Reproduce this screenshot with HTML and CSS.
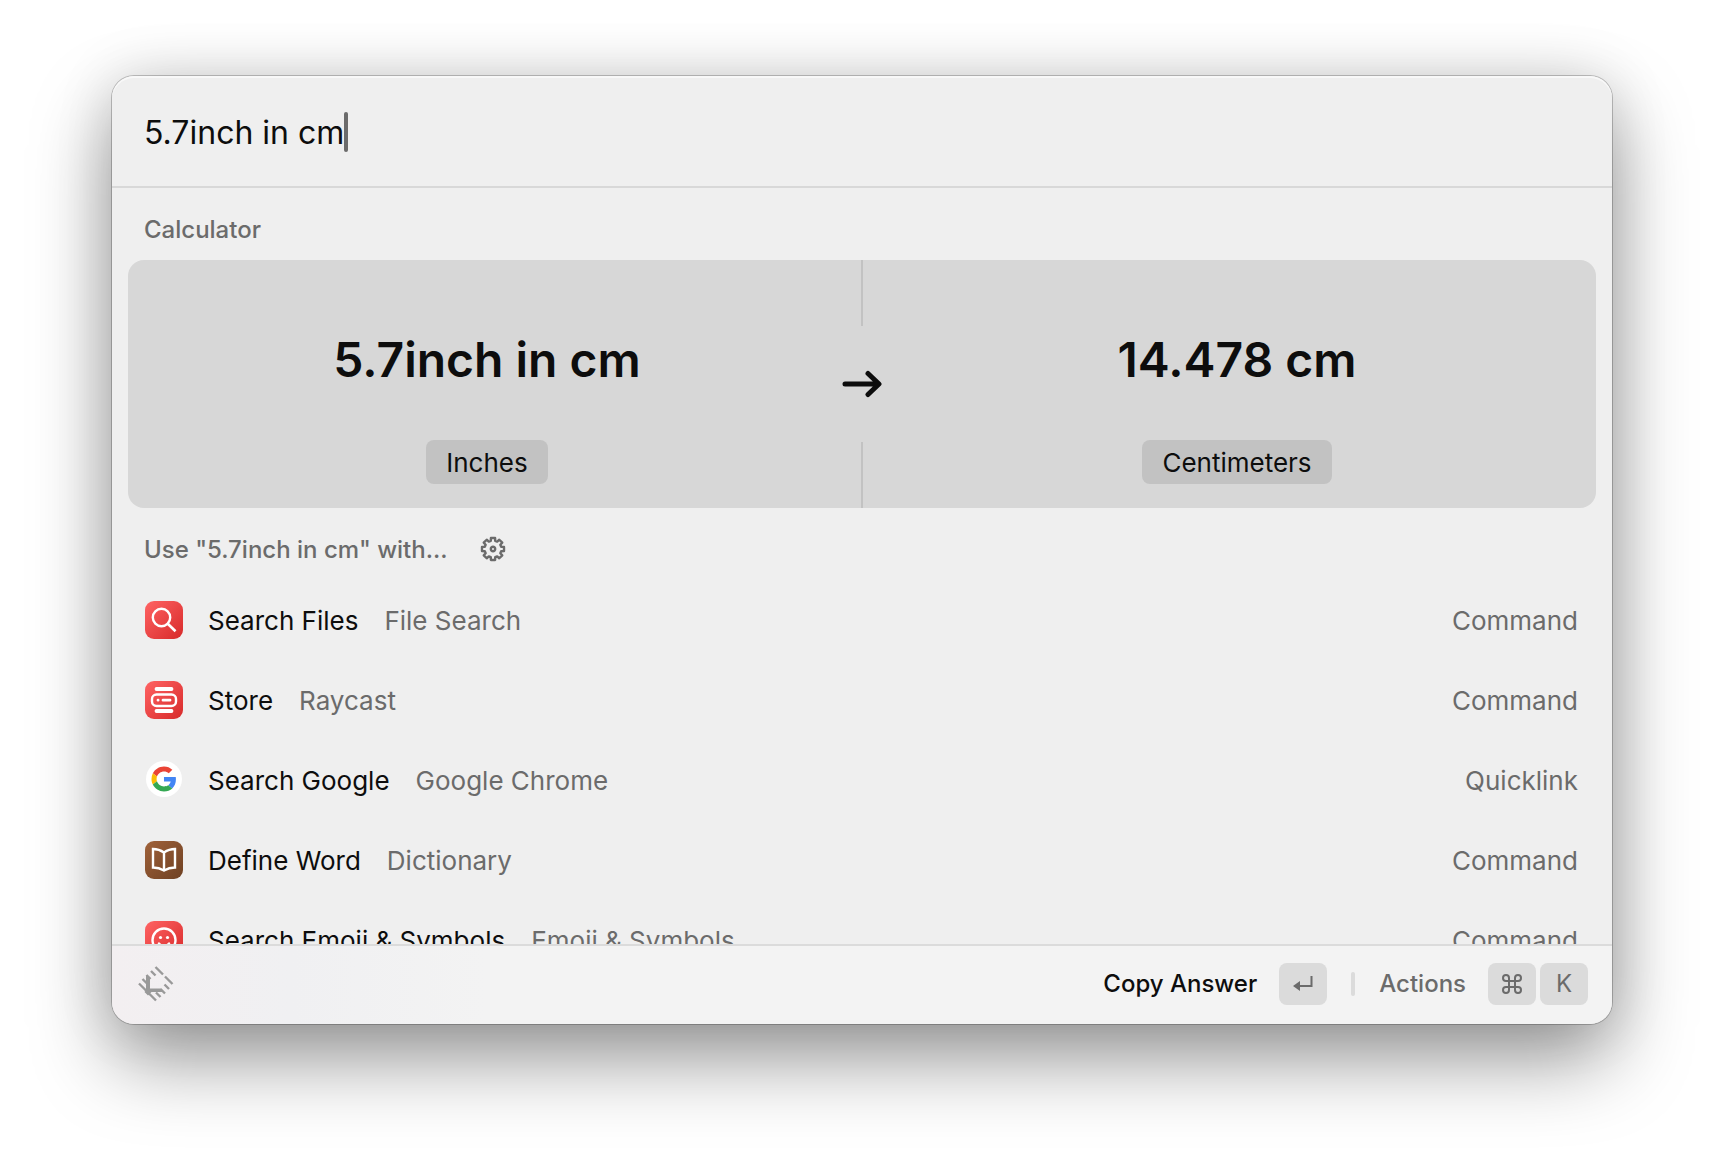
FILE: index.html
```
<!DOCTYPE html>
<html lang="en">
<head>
<meta charset="utf-8">
<title>Raycast</title>
<link rel="stylesheet" href="styles.css">
</head>
<body>
<svg class="defs" width="0" height="0" aria-hidden="true">
  <defs>
    <linearGradient id="red" x1="0" y1="0" x2="1" y2="1"><stop offset="0" stop-color="#ff6363"/><stop offset="1" stop-color="#d72a2a"/></linearGradient>
    <linearGradient id="brown" x1="0" y1="0" x2="1" y2="1"><stop offset="0" stop-color="#a0623a"/><stop offset="1" stop-color="#6e4022"/></linearGradient>
  </defs>
</svg>
<main class="window">
  <header class="search">
    <label class="search-box">
      <input class="query" type="text" value="5.7inch in cm" aria-label="Search" size="1">
      <span class="caret"></span>
    </label>
  </header>

  <div class="results">
    <h2 class="section">Calculator</h2>
    <section class="calculator">
      <div class="operand">
        <strong class="value">5.7inch in cm</strong>
        <span class="unit">Inches</span>
      </div>
      <div class="divider">
        <i class="rule"></i>
        <svg class="arrow" width="40" height="28" viewBox="0 0 40 28" fill="none" stroke="#0d0d0d" stroke-width="5" stroke-linecap="round" stroke-linejoin="round"><path d="M3 14H36M26 3.500L37 14L26 24.500"/></svg>
        <i class="rule"></i>
      </div>
      <div class="operand">
        <strong class="value">14.478 cm</strong>
        <span class="unit">Centimeters</span>
      </div>
    </section>

    <h2 class="section">Use "5.7inch in cm" with...
      <button class="gear" aria-label="Configure fallback commands">
        <svg width="26" height="26" viewBox="-13 -13 26 26" fill="none" stroke="#6b6b6b" stroke-width="2.400" stroke-linejoin="round"><path d="M-2.100-11H2.100L2.200-8.200L4.240-7.350L6.290-9.260L9.260-6.290L7.350-4.240L8.200-2.200L11-2.100V2.100L8.200 2.200L7.350 4.240L9.260 6.290L6.290 9.260L4.240 7.350L2.200 8.200L2.100 11H-2.100L-2.200 8.200L-4.240 7.350L-6.290 9.260L-9.260 6.290L-7.350 4.240L-8.200 2.200L-11 2.100V-2.100L-8.200-2.200L-7.350-4.240L-9.260-6.290L-6.290-9.260L-4.240-7.350L-2.200-8.200Z"/><circle r="2.200"/></svg>
      </button>
    </h2>
    <ul class="list">
      <li class="row">
        <svg class="icon" viewBox="0 0 38 38" fill="none" stroke="#fff"><rect width="38" height="38" rx="9" fill="url(#red)" stroke="none"/><circle cx="16.500" cy="16.500" r="8.700" stroke-width="2.400"/><path d="M23 23l7.500 7.300" stroke-width="2.600"/></svg>
        <span class="title">Search Files</span><span class="subtitle">File Search</span><span class="kind">Command</span>
      </li>
      <li class="row">
        <svg class="icon" viewBox="0 0 38 38" fill="none" stroke="#fff" stroke-linecap="round"><rect width="38" height="38" rx="9" fill="url(#red)" stroke="none"/><path d="M11.500 8h15M11.500 30h15" stroke-width="3.800"/><rect x="7" y="13.500" width="24" height="11.500" rx="4.500" stroke-width="2.400"/><path d="M13 19.200h.1M18 19.200h7" stroke-width="2.800"/></svg>
        <span class="title">Store</span><span class="subtitle">Raycast</span><span class="kind">Command</span>
      </li>
      <li class="row">
        <svg class="icon" viewBox="0 0 38 38"><circle cx="19" cy="18" r="18" fill="#fff"/><g transform="translate(6.500 5.500) scale(.52)"><path fill="#EA4335" d="M24 9.500c3.540 0 6.710 1.220 9.210 3.600l6.850-6.850C35.900 2.380 30.470 0 24 0 14.620 0 6.510 5.380 2.560 13.220l7.980 6.190C12.430 13.720 17.740 9.500 24 9.500z"/><path fill="#4285F4" d="M46.980 24.550c0-1.570-.15-3.090-.38-4.550H24v9.020h12.940c-.58 2.960-2.260 5.480-4.780 7.180l7.730 6c4.510-4.180 7.090-10.360 7.090-17.650z"/><path fill="#FBBC05" d="M10.530 28.590c-.48-1.450-.76-2.990-.76-4.590s.27-3.140.76-4.590l-7.980-6.190C.92 16.460 0 20.120 0 24s.92 7.540 2.560 10.780l7.970-6.190z"/><path fill="#34A853" d="M24 48c6.480 0 11.930-2.130 15.890-5.810l-7.730-6c-2.150 1.450-4.920 2.300-8.160 2.300-6.260 0-11.570-4.220-13.470-9.910l-7.980 6.190C6.510 42.620 14.620 48 24 48z"/></g></svg>
        <span class="title">Search Google</span><span class="subtitle">Google Chrome</span><span class="kind">Quicklink</span>
      </li>
      <li class="row">
        <svg class="icon" viewBox="0 0 38 38" fill="none" stroke="#fff"><rect width="38" height="38" rx="9" fill="url(#brown)" stroke="none"/><path d="M19 11.500Q14 8 8 8V26.500Q14 26.500 19 29.500Q24 26.500 30 26.500V8Q24 8 19 11.500V29.500" stroke-width="2.400"/></svg>
        <span class="title">Define Word</span><span class="subtitle">Dictionary</span><span class="kind">Command</span>
      </li>
      <li class="row">
        <svg class="icon" viewBox="0 0 38 38" fill="none" stroke="#fff"><rect width="38" height="38" rx="9" fill="url(#red)" stroke="none"/><circle cx="19" cy="19" r="11.500" stroke-width="2.400"/><g fill="#fff" stroke="none"><circle cx="15.500" cy="16.500" r="1.600"/><circle cx="22.500" cy="16.500" r="1.600"/></g><path d="M14 22.500Q19 28 24 22.500" stroke-width="2.400" stroke-linecap="round"/></svg>
        <span class="title">Search Emoji &amp; Symbols</span><span class="subtitle">Emoji &amp; Symbols</span><span class="kind">Command</span>
      </li>
    </ul>
  </div>

  <footer class="bar">
    <svg class="logo" width="36" height="36" viewBox="0 0 36 36" fill="none" stroke="#999" stroke-width="2.400"><path d="M1 17.500L18 34.500M17.500 1L25 8.500M27 10.500L34.500 18M13 5L17.500 9.500M26.500 18.500L31 23M8.500 9L12.500 13M22.500 23L27 27.500M4.500 13L9 17.500M18 26.500L22.500 31"/><path d="M8 9l4 3v10.500h11l3 3.500H13.500L10 29.500L6.500 26L8 24z" fill="#999" stroke="none"/></svg>
    <button class="action primary">Copy Answer
      <kbd><svg width="20" height="18" viewBox="0 0 20 18"><path d="M18.500 1v10H6" fill="none" stroke="#6b6b6b" stroke-width="2"/><path d="M7 6v10L0 11z" fill="#6b6b6b"/></svg></kbd>
    </button>
    <i class="separator"></i>
    <button class="action">Actions
      <span class="keys"><kbd><svg width="20" height="20" viewBox="0 0 20 20" fill="none" stroke="#6b6b6b" stroke-width="2"><path d="M7 7V4a3 3 0 1 0-3 3h12a3 3 0 1 0-3-3v12a3 3 0 1 0 3-3H4a3 3 0 1 0 3 3z"/></svg></kbd><kbd>K</kbd></span>
    </button>
  </footer>
</main>
</body>
</html>
```
FILE: styles.css
```
* { box-sizing: border-box; }

body {
  margin: 0;
  padding: 76px 112px 148px;
  background: #fff;
  color: #0d0d0d;
  font: 400 26px/32px Inter, "Liberation Sans", sans-serif;
}

.defs { position: absolute; }

.window {
  display: flex;
  flex-direction: column;
  border-radius: 22px;
  overflow: hidden;
  background: #efefef;
  box-shadow: inset 0 2px 0 #f8f8f8, 0 0 0 1px rgba(0, 0, 0, .22), 0 36px 80px rgba(0, 0, 0, .4), 0 0 60px rgba(0, 0, 0, .12);
}

.search {
  padding: 34px 32px 32px;
  border-bottom: 2px solid #d8d8d8;
}

.search-box { display: flex; align-items: center; height: 44px; }

.query {
  field-sizing: content;
  padding: 2px 0 0;
  border: 0;
  outline: 0;
  background: none;
  color: inherit;
  font: 400 32px/40px Inter, "Liberation Sans", sans-serif;
}

.caret { width: 4px; height: 40px; border-radius: 2px; background: #6b6b6b; }

.results { height: 756px; overflow: hidden; }

.section {
  display: flex;
  align-items: center;
  gap: 32px;
  height: 72px;
  margin: 0;
  padding: 12px 32px 0;
  color: #6b6b6b;
  font-size: 24px;
  font-weight: 500;
}

.gear { display: flex; padding: 0 0 2px; border: 0; background: none; }

.calculator {
  display: grid;
  grid-template-columns: 1fr 32px 1fr;
  height: 248px;
  margin: 0 16px;
  border-radius: 16px;
  background: #d7d7d7;
}

.operand {
  display: flex;
  flex-direction: column;
  align-items: center;
  justify-content: space-between;
  padding: 68px 0 24px;
}

.value { font-size: 48px; line-height: 64px; font-weight: 600; }

.unit {
  padding: 7px 20px 5px;
  border-radius: 8px;
  background: #c2c2c2;
}

.divider {
  display: flex;
  flex-direction: column;
  align-items: center;
  justify-content: space-between;
}

.rule { width: 2px; height: 66px; background: #c2c2c2; }
.arrow { flex: none; }

.list { margin: 0; padding: 0; list-style: none; }

.row {
  display: flex;
  align-items: center;
  height: 80px;
  padding: 0 34px 0 33px;
}

.row span { padding-top: 2px; }
.icon { width: 38px; height: 38px; margin-right: 25px; }
.subtitle { margin-left: 26px; color: #6b6b6b; }
.kind { margin-left: auto; color: #6b6b6b; }

.bar {
  display: flex;
  align-items: center;
  height: 80px;
  padding: 0 24px 2px 26px;
  border-top: 2px solid #dbdbdb;
  background: linear-gradient(90deg, #f3eff1, #f0f0f2 12%, #f3f3f3 25%);
}

.logo { margin-right: auto; }

.action {
  display: flex;
  align-items: center;
  gap: 22px;
  padding: 0;
  border: 0;
  background: none;
  color: #6b6b6b;
  font: 500 24px/32px Inter, "Liberation Sans", sans-serif;
}

.primary { color: #0d0d0d; }
.keys { display: flex; gap: 4px; }

kbd {
  display: flex;
  align-items: center;
  justify-content: center;
  width: 48px;
  height: 42px;
  border-radius: 8px;
  background: #dbdbdb;
  color: #6b6b6b;
  font: 400 24px/32px Inter, "Liberation Sans", sans-serif;
}

.separator { width: 4px; height: 24px; margin: 0 24px; border-radius: 2px; background: #dbdbdb; }
```
